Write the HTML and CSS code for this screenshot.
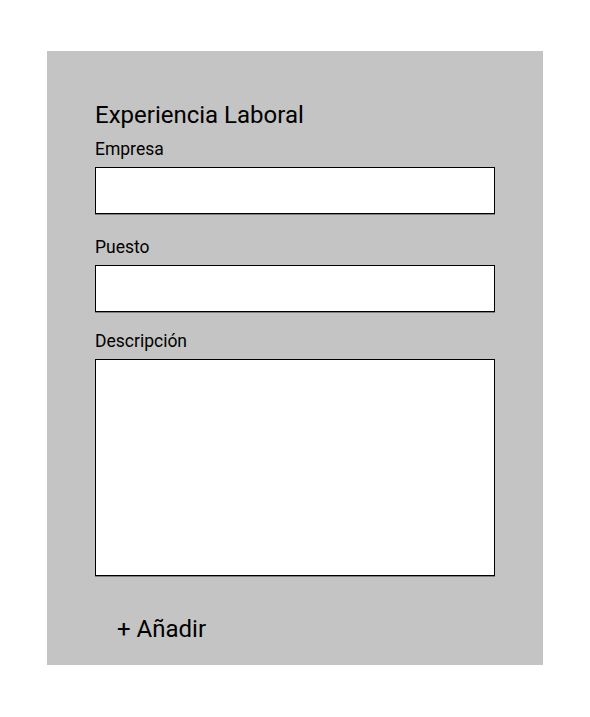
FILE: index.html
```html
<!DOCTYPE html>
<html lang="es">
<head>
<meta charset="utf-8">
<link rel="stylesheet" href="styles.css">
</head>
<body>
<section class="panel">
  <h2 class="title">Experiencia Laboral</h2>
  <label class="label label-first">Empresa</label>
  <div class="field"></div>
  <label class="label label-puesto">Puesto</label>
  <div class="field"></div>
  <label class="label label-desc">Descripción</label>
  <div class="field area"></div>
  <button class="add">+ Añadir</button>
</section>
</body>
</html>
```
FILE: styles.css
```css
* { box-sizing: border-box; }
html, body { margin: 0; padding: 0; background: #fff; }
body { font-family: Roboto, "Liberation Sans", sans-serif; color: #000; }
.panel {
  margin: 51px 0 0 47px;
  width: 496px;
  height: 614px;
  background: #c4c4c4;
  padding: 50px 48px 0 48px;
  display: flex;
  flex-direction: column;
}
.title {
  margin: 0;
  font-size: 24px;
  font-weight: 400;
  line-height: 28px;
}
.label {
  display: block;
  font-size: 17.5px;
  line-height: 20px;
  margin-bottom: 8px;
}
.label-first { margin-top: 10px; }
.label-puesto { margin-top: 23px; }
.label-desc { margin-top: 19px; }
.field {
  width: 400px;
  height: 47px;
  background: #fff;
  border: 1px solid #000;
  box-shadow: 0 1px 0 rgba(0,0,0,0.35);
}
.area { height: 217px; }
.add {
  align-self: flex-start;
  margin: 39px 0 0 22px;
  padding: 0;
  border: 0;
  background: transparent;
  font-family: Roboto, "Liberation Sans", sans-serif;
  font-size: 24px;
  line-height: 28px;
  color: #000;
}
```
